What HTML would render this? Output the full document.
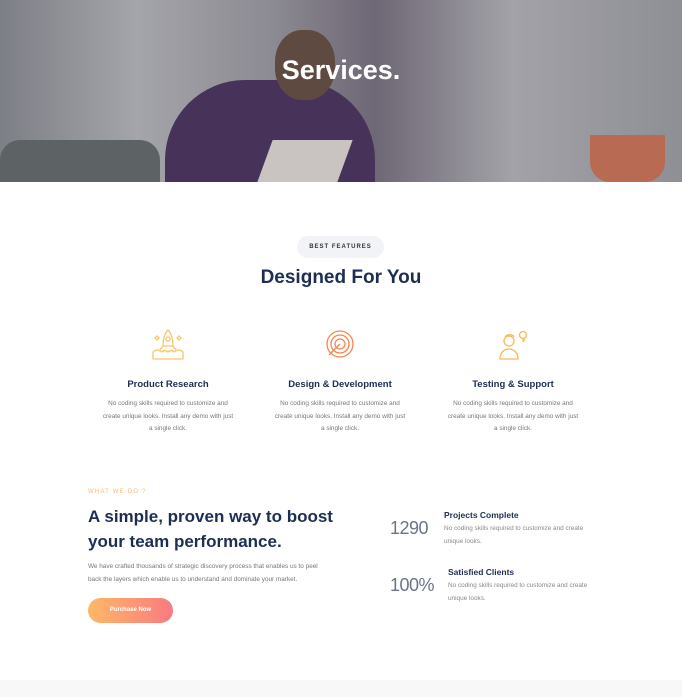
<!DOCTYPE html>
<html><head><meta charset="utf-8"><style>
*{margin:0;padding:0;box-sizing:border-box}
body{width:682px;height:697px;overflow:hidden;background:#fff;font-family:"Liberation Sans",sans-serif;position:relative;color:#1c2f52}
.hero{position:absolute;left:0;top:0;width:682px;height:182px;background:linear-gradient(90deg,#7d7f86 0%,#a4a5aa 20%,#8c8a92 40%,#6e6775 55%,#a2a2a8 75%,#8e8f94 100%);overflow:hidden}
.hero h1{position:absolute;top:55px;width:100%;text-align:center;color:#fff;font-size:27px;font-weight:bold}
.abs{position:absolute}
.pill{left:297px;top:236px;width:87px;height:22px;border-radius:11px;background:#f1f3f6;font-size:6px;letter-spacing:1px;text-align:center;line-height:22px;font-weight:bold;color:#333}
.h2{left:0;width:682px;top:267px;text-align:center;font-size:19px;font-weight:bold}
.ft{font-size:9.5px;font-weight:bold;text-align:center;width:180px}
.fd{font-size:6.4px;color:#777;line-height:12.5px;text-align:center;width:134px}
.big{font-size:17px;font-weight:bold;line-height:25px}
.num{font-size:18px;color:#6a7488;font-weight:normal;letter-spacing:-0.5px}
.st{font-size:8.5px;font-weight:bold}
.sd{font-size:6.4px;color:#888;line-height:12.5px}
</style></head><body>
<div class="hero">
<div class="abs" style="left:0;top:140px;width:160px;height:42px;background:#5d6264;border-radius:20px 20px 0 0"></div>
<div class="abs" style="left:165px;top:80px;width:210px;height:112px;background:#47325a;border-radius:80px 80px 0 0"></div>
<div class="abs" style="left:275px;top:30px;width:60px;height:70px;background:#5e4a40;border-radius:45%"></div>
<div class="abs" style="left:265px;top:140px;width:80px;height:42px;background:#c9c4c2;transform:skewX(-20deg)"></div>
<div class="abs" style="left:590px;top:135px;width:75px;height:47px;background:#b86a52;border-radius:0 0 20px 20px"></div>
<h1>Services.</h1>
</div>
<div class="abs pill">BEST FEATURES</div>
<div class="abs h2">Designed For You</div>

<svg class="abs" style="left:150px;top:328px" width="36" height="34" viewBox="0 0 36 34" fill="none" stroke="#fcc566" stroke-width="1.3"><path d="M18 2c-4 4-5 10-5 16h10c0-6-1-12-5-16zM13 18l-4 5M23 18l4 5M3 24c3-3 7-2 9 0 2-2 4-2 6 0 2-2 4-2 6 0 2-2 6-3 9 0v7H3z"/><circle cx="18" cy="11" r="2"/><path d="M5 10l2-2 2 2-2 2zM27 10l2-2 2 2-2 2z"/></svg>
<svg class="abs" style="left:325px;top:329px" width="30" height="30" viewBox="0 0 30 30" fill="none" stroke="#f5864d" stroke-width="1.3"><circle cx="15" cy="15" r="13"/><circle cx="15" cy="15" r="9"/><circle cx="15" cy="15" r="5"/><path d="M15 15L4 26"/></svg>
<svg class="abs" style="left:497px;top:328px" width="32" height="32" viewBox="0 0 32 32" fill="none" stroke="#fcb656" stroke-width="1.3"><circle cx="12" cy="13" r="5"/><path d="M3 31c0-6 4-10 9-10s9 4 9 10zM8 9c2-3 8-3 9 0"/><circle cx="26" cy="7" r="3.5"/><path d="M25 11h2v2h-2"/></svg>

<div class="abs ft" style="left:78px;top:379px">Product Research</div>
<div class="abs ft" style="left:250px;top:379px">Design &amp; Development</div>
<div class="abs ft" style="left:423px;top:379px">Testing &amp; Support</div>
<div class="abs fd" style="left:101px;top:398px">No coding skills required to customize and create unique looks. Install any demo with just a single click.</div>
<div class="abs fd" style="left:273px;top:398px">No coding skills required to customize and create unique looks. Install any demo with just a single click.</div>
<div class="abs fd" style="left:446px;top:398px">No coding skills required to customize and create unique looks. Install any demo with just a single click.</div>

<div class="abs" style="left:88px;top:489px;font-size:6px;letter-spacing:1.2px;color:#fdb871">WHAT WE DO ?</div>
<div class="abs big" style="left:88px;top:504px">A simple, proven way to boost<br>your team performance.</div>
<div class="abs sd" style="left:88px;top:561px;color:#777">We have crafted thousands of strategic discovery process that enables us to peel<br>back the layers which enable us to understand and dominate your market.</div>
<div class="abs" style="left:88px;top:598px;width:85px;height:25px;border-radius:13px;background:linear-gradient(90deg,#fdb866,#fa7a80);color:#fff;font-size:6px;font-weight:bold;text-align:center;line-height:25px">Purchase Now</div>

<div class="abs num" style="left:390px;top:518px">1290</div>
<div class="abs st" style="left:444px;top:510px">Projects Complete</div>
<div class="abs sd" style="left:444px;top:523px">No coding skills required to customize and create<br>unique looks.</div>
<div class="abs num" style="left:390px;top:575px">100%</div>
<div class="abs st" style="left:448px;top:567px">Satisfied Clients</div>
<div class="abs sd" style="left:448px;top:580px">No coding skills required to customize and create<br>unique looks.</div>

<div class="abs" style="left:0;top:680px;width:682px;height:17px;background:#f8f8f9"></div>
</body></html>
